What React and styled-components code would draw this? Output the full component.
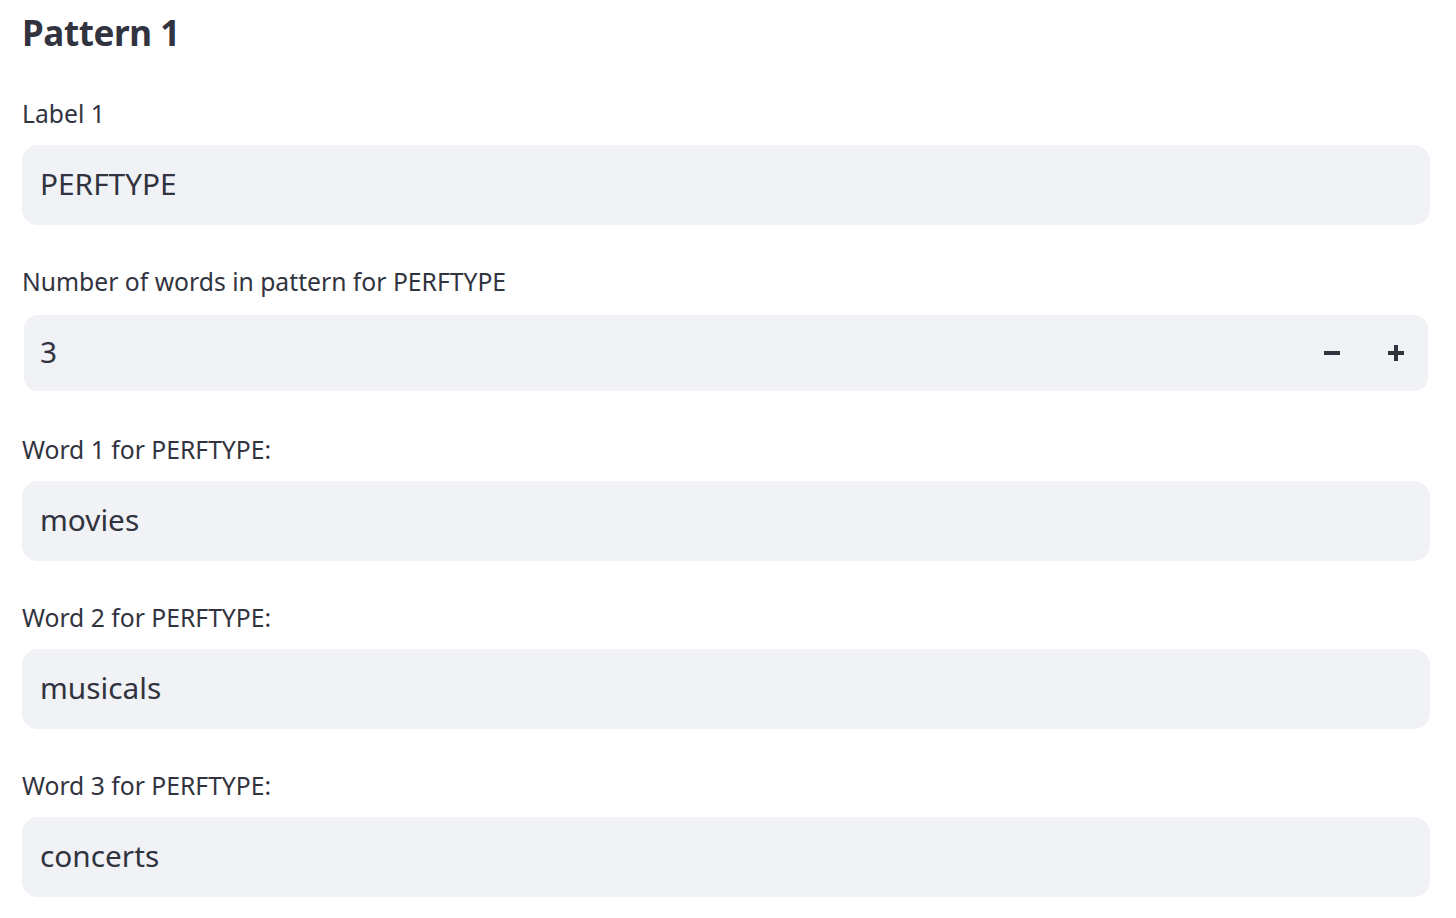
import styled, { createGlobalStyle } from 'styled-components';

const GlobalStyle = createGlobalStyle`
  html, body {
    margin: 0;
    padding: 0;
    background: #ffffff;
  }
  body {
    font-family: "Noto Sans", "Open Sans", sans-serif;
    color: #31333f;
  }
`;

function App() {
  return (
    <>
      <GlobalStyle />
      <Page>
        <Heading>Pattern 1</Heading>
        <Widget>
          <Label>Label 1</Label>
          <TextBox>
            <Value>PERFTYPE</Value>
          </TextBox>
        </Widget>
        <Widget>
          <Label>Number of words in pattern for PERFTYPE</Label>
          <NumberBox>
            <Value>3</Value>
            <Stepper type="button" aria-label="decrement">
              <svg width="16" height="16" viewBox="0 0 16 16">
                <rect x="0" y="6" width="16" height="4" fill="#31333f" />
              </svg>
            </Stepper>
            <Stepper type="button" aria-label="increment">
              <svg width="16" height="16" viewBox="0 0 16 16">
                <rect x="0" y="6" width="16" height="4" fill="#31333f" />
                <rect x="6" y="0" width="4" height="16" fill="#31333f" />
              </svg>
            </Stepper>
          </NumberBox>
        </Widget>
        {['movies', 'musicals', 'concerts'].map((word, i) => (
          <Widget key={word}>
            <Label>Word {i + 1} for PERFTYPE:</Label>
            <TextBox>
              <Value>{word}</Value>
            </TextBox>
          </Widget>
        ))}
      </Page>
    </>
  );
}

export default App;

const Page = styled.div`
  width: 1408px;
  padding: 0 26px 0 22px;
  display: flex;
  flex-direction: column;
  gap: 37px;
`;

const Heading = styled.h3`
  margin: 0 0 -37px;
  height: 94px;
  box-sizing: border-box;
  padding-top: 15px;
  font-size: 35px;
  font-weight: 700;
  line-height: 1;
  letter-spacing: -0.4px;
`;

const Widget = styled.div`
  display: flex;
  flex-direction: column;
`;

const Label = styled.label`
  height: 40px;
  line-height: 39px;
  margin-bottom: 11px;
  font-size: 24.7px;
  font-weight: 400;
`;

const TextBox = styled.div`
  height: 80px;
  box-sizing: border-box;
  background: #f0f2f6;
  border-radius: 16px;
  padding: 0 18px;
  display: flex;
  align-items: center;
`;

const NumberBox = styled(TextBox)`
  border: 2px solid #ffffff;
  padding: 0 24px 0 16px;
`;

const Value = styled.span`
  flex: 1;
  font-size: 29.8px;
  line-height: 1;
  margin-top: -2px;
`;

const Stepper = styled.button`
  width: 64px;
  height: 100%;
  border: none;
  background: transparent;
  padding: 0;
  display: flex;
  align-items: center;
  justify-content: flex-end;
  cursor: pointer;
`;
